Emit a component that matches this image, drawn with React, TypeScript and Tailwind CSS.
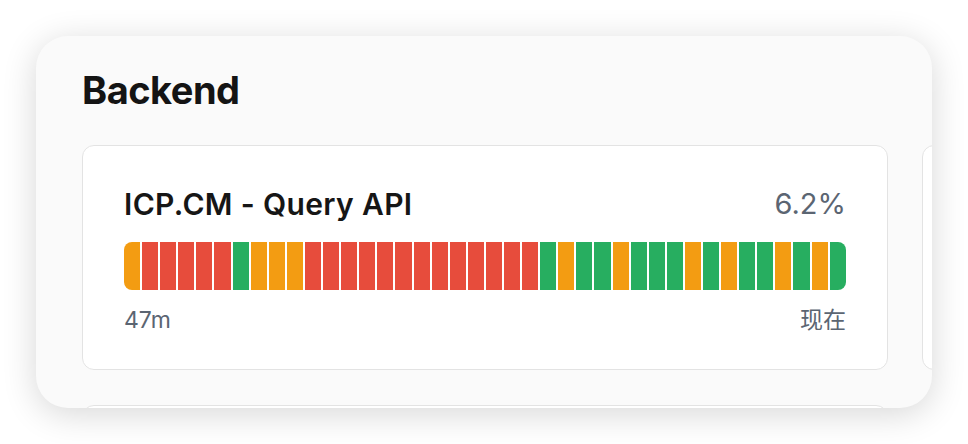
const history = "ORRRRRGOOORRRRRRRRRRRRRGOGGOGGGOGOGGOGOG";

const segColors: Record<string, string> = {
  G: "bg-[#27ae60]",
  O: "bg-[#f39c12]",
  R: "bg-[#e74c3c]",
};

function UptimeCard({ name, ratio, from }: { name: string; ratio: string; from: string }) {
  return (
    <div className="h-[225px] rounded-[12px] border border-[#e3e3e3] bg-white px-[41px] pt-[40px]">
      <div className="flex items-center justify-between leading-[36px]">
        <span className="text-[30px] font-semibold tracking-[0.35px] text-[#161616]">{name}</span>
        <span className="text-[29px] text-[#5b6572]">{ratio}</span>
      </div>
      <div className="mt-[20px] flex h-[48px] gap-[2px] overflow-hidden rounded-[8px]">
        {history.split("").map((s, i) => (
          <div key={i} className={`flex-1 ${segColors[s]}`} />
        ))}
      </div>
      <div className="mt-[16px] flex justify-between text-[23px] leading-[28px] text-[#5b6572]">
        <span>{from}</span>
        <span>现在</span>
      </div>
    </div>
  );
}

export default function App() {
  return (
    <div
      className="h-[444px] w-[968px] bg-white p-[36px]"
      style={{ fontFamily: 'Inter, "Noto Sans CJK SC", sans-serif' }}
    >
      <div className="h-[372px] w-[896px] overflow-hidden rounded-[32px] bg-[#fafafa] pl-[46px] pt-[30px] shadow-[0_6px_34px_rgba(0,0,0,0.16)]">
        <h2 className="text-[38px] font-bold leading-[48px] tracking-[-0.5px] text-[#141414]">Backend</h2>
        <div className="mt-[31px] grid grid-cols-[806px_806px] gap-x-[34px] gap-y-[35px]">
          <UptimeCard name="ICP.CM - Query API" ratio="6.2%" from="47m" />
          <div className="h-[225px] rounded-[12px] border border-[#e3e3e3] bg-white" />
          <div className="h-[225px] rounded-[12px] border border-[#e3e3e3] bg-white" />
        </div>
      </div>
    </div>
  );
}
